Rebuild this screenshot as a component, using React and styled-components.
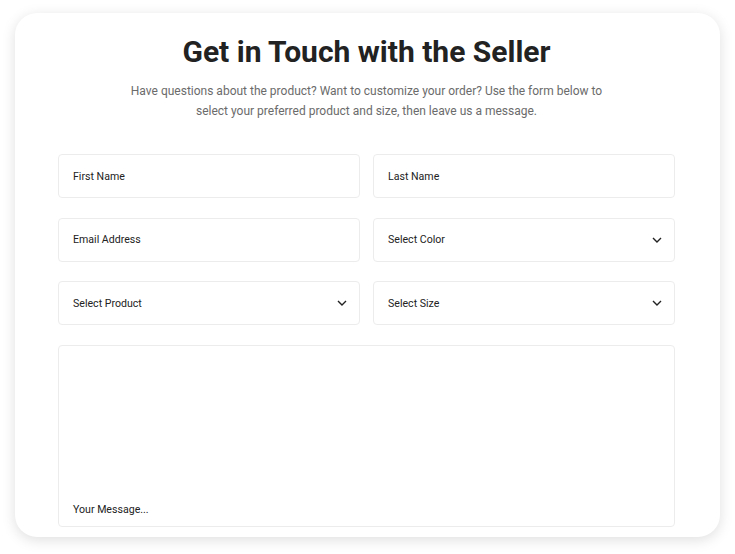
import React from "react"
import styled, { createGlobalStyle } from "styled-components"

const GlobalStyle = createGlobalStyle`
  * { box-sizing: border-box; }
  body {
    margin: 0;
    background: #fff;
    font-family: Roboto, "Liberation Sans", sans-serif;
  }
`

const Chevron = () => (
  <svg width="10" height="6" viewBox="0 0 10 6" fill="none">
    <path d="M1 1l4 4 4-4" stroke="#222" strokeWidth="1.4" />
  </svg>
)

export default function App() {
  return (
    <Page>
      <GlobalStyle />
      <Card>
        <Title>Get in Touch with the Seller</Title>
        <Lead>
          Have questions about the product? Want to customize your order? Use the form below to
          select your preferred product and size, then leave us a message.
        </Lead>
        <Form>
          <Field>First Name</Field>
          <Field>Last Name</Field>
          <Field>Email Address</Field>
          <Field>
            Select Color
            <Chevron />
          </Field>
          <Field>
            Select Product
            <Chevron />
          </Field>
          <Field>
            Select Size
            <Chevron />
          </Field>
          <Message>Your Message...</Message>
        </Form>
      </Card>
    </Page>
  )
}

/* - - - Styled Components - - - */

const Page = styled.div`
  padding: 13px 15px 17px;
  height: 554px;
`

const Card = styled.div`
  height: 524px;
  background: #fff;
  border-radius: 22px;
  box-shadow: 0 3px 14px rgba(0, 0, 0, 0.13);
  padding: 21px 45px 10px 43px;
  overflow: hidden;
`

const Title = styled.h1`
  margin: 0;
  font-size: 30px;
  line-height: 36px;
  font-weight: 700;
  color: #222;
  text-align: center;
`

const Lead = styled.p`
  margin: 11px auto 0;
  width: 490px;
  font-size: 12px;
  line-height: 20px;
  color: #6b6b6b;
  text-align: center;
`

const Form = styled.div`
  margin-top: 33px;
  display: grid;
  grid-template-columns: 1fr 1fr;
  column-gap: 13px;
  row-gap: 19.5px;
`

const Field = styled.div`
  height: 44px;
  border: 1px solid #ececec;
  border-radius: 4px;
  padding: 0 12px 0 14px;
  display: flex;
  align-items: center;
  justify-content: space-between;
  font-size: 10.6px;
  color: #222;
`

const Message = styled(Field)`
  grid-column: 1 / -1;
  height: 182px;
  margin-top: 0.5px;
  align-items: flex-end;
  padding-bottom: 10px;
`
